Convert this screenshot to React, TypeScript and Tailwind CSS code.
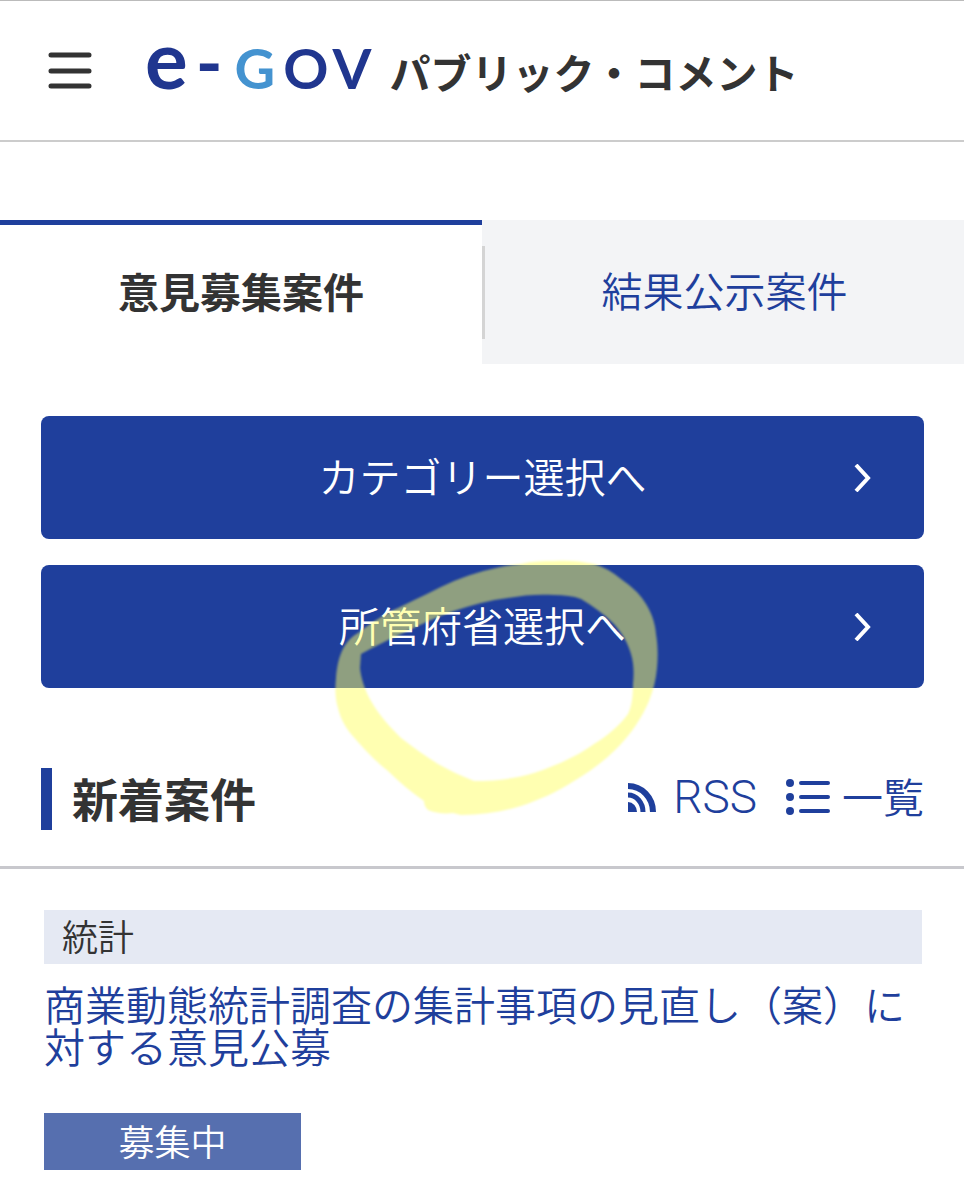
import type { ReactNode } from 'react'

type ButtonProps = {
    label: string
}

type LinkProps = {
    children: ReactNode
}

const MenuIcon = () => (
    <svg width="44" height="38" viewBox="0 0 44 38" fill="none" stroke="#333333" strokeWidth="5" strokeLinecap="round">
        <path d="M3 3H41M3 19H41M3 34H41" />
    </svg>
)

const RssIcon = () => (
    <svg width="29" height="30" viewBox="0 0 29 30" fill="none" stroke="#1f3f9c" strokeWidth="6">
        <path d="M0 20A9 10 0 0 1 9 30H0Z" fill="#1f3f9c" stroke="none" />
        <path d="M0 13A15 17 0 0 1 15 30" strokeWidth="5" />
        <path d="M0 4A25 26 0 0 1 25 30" />
    </svg>
)

const ListIcon = () => (
    <svg width="45" height="38" viewBox="0 0 45 38" fill="#1f3f9c" stroke="#1f3f9c" strokeWidth="4" strokeLinecap="round">
        <circle cx="5" cy="5" r="4" stroke="none" />
        <circle cx="5" cy="19" r="4" stroke="none" />
        <circle cx="5" cy="33" r="4" stroke="none" />
        <path d="M16 5H43M16 19H43M16 33H43" />
    </svg>
)

const Marker = () => (
    <svg
        className="absolute left-1/2 -top-2 -ml-38 max-w-none pointer-events-none blur-[1px]"
        width="330"
        height="264"
        viewBox="0 0 330 264"
        aria-hidden="true"
    >
        <path
            fill="#ffff64"
            fillOpacity="0.5"
            fillRule="evenodd"
            d="M5 121C6 108 9 86 27 76C42 65 53 57 67 51C86 42 105 32 123 24C145 15 168 9 190 7C201 4 212 4 223 4C237 3 250 4 263 7C273 10 282 15 290 22C300 29 308 36 313 44C320 54 324 65 325 77C327 89 327 100 326 111C325 123 322 134 318 144C311 160 302 174 290 187C276 202 260 214 243 224C226 235 208 243 190 249C170 255 150 258 130 258L122 256C113 257 104 256 97 253C94 250 93 247 93 244C80 235 68 225 57 214C43 203 31 190 20 177C13 168 9 160 7 151C4 141 4 131 5 121Z
               M30 97C43 90 56 83 70 77C87 69 105 60 123 54C141 48 159 43 177 41C193 38 208 37 223 38C233 38 242 39 250 42C262 49 273 57 283 67C291 76 297 86 300 97C303 107 303 117 302 127C302 138 301 149 297 157C288 169 276 179 263 187C245 200 224 209 203 216C183 222 163 224 143 224C130 219 118 213 107 207C94 199 82 190 70 181C59 170 48 158 40 144C34 134 30 121 29 111Z"
        />
    </svg>
)

const SelectButton = ({label}: ButtonProps) => (
    <button className="flex w-full h-[123px] items-center rounded-lg bg-[#1f3f9c] pl-[70px] pr-[53px] text-[41px] text-white">
        <span className="flex-1 pb-1">{label}</span>
        <svg width="17" height="28" viewBox="0 0 17 28" fill="none" stroke="currentColor" strokeWidth="4">
            <path d="M2 1L14 14L2 27" />
        </svg>
    </button>
)

const IconLink = ({children}: LinkProps) => (
    <a href="#" className="flex items-center text-[#1f3f9c]">{children}</a>
)

const Header = () => (
    <header className="flex h-[142px] items-center border-t border-b-2 border-t-[#bbbbbb] border-b-[#cccccc] pl-12">
        <button aria-label="メニュー"><MenuIcon /></button>
        <a href="#" className="ml-[53px] flex items-baseline pb-3 font-bold leading-[60px]">
            <span className="flex items-baseline font-[Lato,sans-serif] text-[56px] text-[#20368f]">
                <span className="text-[80px]">e</span>
                <span className="ml-2 text-[72px]">-</span>
                <span className="ml-3 text-[#4493d0]">G</span>
                <span className="ml-2">O</span>
                <span className="ml-1">V</span>
            </span>
            <span className="ml-[18px] whitespace-nowrap text-[41px]">パブリック・コメント</span>
        </a>
    </header>
)

export default function App() {
    return (
        <div className="min-h-screen bg-white pb-[30px] font-[Noto_Sans_CJK_JP,sans-serif] font-[350] text-[#333333]">
            <Header />
            <nav className="mt-[78px] flex h-36 text-[41px]">
                <a href="#" className="flex flex-1 items-center justify-center border-t-5 border-[#1f3f9c] pb-2 font-bold">意見募集案件</a>
                <a href="#" className="flex flex-1 items-center bg-[#f3f4f6] text-[#1f3f9c]">
                    <span className="h-[93px] w-[3px] bg-[#d4d4d4]"></span>
                    <span className="flex-1 pb-1 text-center">結果公示案件</span>
                </a>
            </nav>
            <main>
                <div className="ml-[41px] mr-10 mt-[52px] text-center">
                    <SelectButton label="カテゴリー選択へ" />
                    <div className="relative mt-[26px]">
                        <SelectButton label="所管府省選択へ" />
                        <Marker />
                    </div>
                </div>
                <div className="mt-20 flex h-[101px] items-start justify-between border-b-3 border-[#c8c8cd] pl-[41px] pr-10">
                    <h2 className="border-l-11 border-[#1f3f9c] pb-1 pl-5 text-[46px] leading-[58px] font-bold">新着案件</h2>
                    <div className="flex gap-7 text-[41px] leading-[58px]">
                        <IconLink>
                            <RssIcon />
                            <span className="ml-4 font-[Roboto,sans-serif] text-[46px] font-light">RSS</span>
                        </IconLink>
                        <IconLink>
                            <ListIcon />
                            <span className="ml-3 pb-1 leading-[54px]">一覧</span>
                        </IconLink>
                    </div>
                </div>
                <article className="ml-11 mr-[42px] mt-[41px]">
                    <p className="bg-[#e5e9f3] pb-1 pl-[18px] text-[36px] leading-[50px]">統計</p>
                    <a href="#" className="mt-[18px] block text-[41px] leading-[42px] text-[#1f3f9c]">
                        商業動態統計調査の集計事項の見直し（案）に対する意見公募
                    </a>
                    <p className="mt-[47px] w-[257px] bg-[#566faf] pb-[3px] text-center text-[36px] leading-[54px] text-white">募集中</p>
                </article>
            </main>
        </div>
    )
}
